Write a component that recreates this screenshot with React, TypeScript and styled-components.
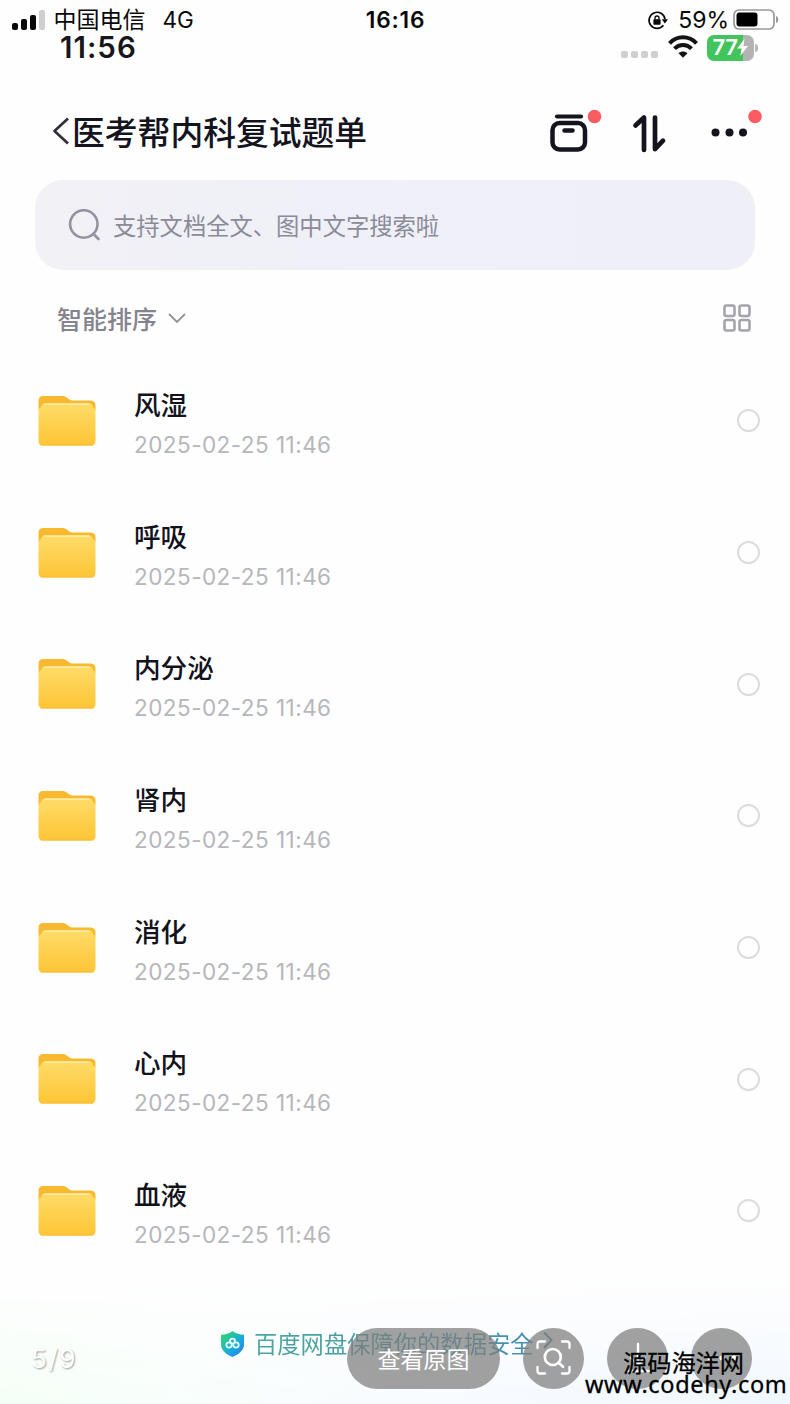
import React from "react";
import styled, { createGlobalStyle } from "styled-components";

const Global = createGlobalStyle`
  * { box-sizing: border-box; }
  html, body { margin: 0; padding: 0; background: #fefefe; }
  body { font-family: Inter, "Noto Sans CJK SC", sans-serif; color: #14141e; }
  svg { display: block; flex: none; overflow: visible; }
`;

const Screen = styled.main`
  position: relative;
  width: 790px;
  height: 1404px;
  overflow: hidden;
  display: flex;
  flex-direction: column;
  background: #fefefe;
`;

const StatusBar = styled.div`
  height: 34px;
  padding: 6px 11px 0 12px;
  display: grid;
  grid-template-columns: 1fr auto 1fr;
  align-items: center;
  color: #080808;
  line-height: 28px;
`;

const Group = styled.div<{ $end?: boolean }>`
  display: flex;
  align-items: center;
  justify-content: ${(p) => (p.$end ? "flex-end" : "flex-start")};
`;

const Label = styled.span<{ $size: number; $weight?: number; $track?: number; $left?: number }>`
  font-size: ${(p) => p.$size}px;
  font-weight: ${(p) => p.$weight ?? 400};
  letter-spacing: ${(p) => p.$track ?? 0}px;
  margin-left: ${(p) => p.$left ?? 0}px;
  white-space: nowrap;
`;

const InnerStatus = styled.div`
  height: 27px;
  padding: 0 32px 0 60px;
  display: flex;
  align-items: center;
  justify-content: space-between;
  line-height: 27px;
  color: #17171b;
`;

const SignalDots = styled.div`
  display: flex;
  gap: 3px;
  margin: 13px 10px 0 0;
  i { width: 7px; height: 7px; border-radius: 2px; background: #cfcfcf; }
`;

const ChargeBattery = styled.div`
  display: flex;
  align-items: center;
  justify-content: center;
  width: 47px;
  height: 26px;
  margin-left: 9px;
  border-radius: 7px;
  background: linear-gradient(90deg, #41c45c 76%, #b3b3b3 76%);
  color: #fff;
`;

const BatteryTip = styled.i`
  width: 3px;
  height: 8px;
  margin-left: 1px;
  border-radius: 0 3px 3px 0;
  background: #b8b8b8;
`;

const Header = styled.header`
  height: 119px;
  padding: 24px 28px 0 52px;
  display: flex;
  align-items: center;
`;

const Title = styled.h1`
  flex: 1;
  margin: 0 0 0 2px;
  font-size: 32.8px;
  line-height: 40px;
  font-weight: 500;
  color: #14141f;
`;

const Search = styled.div`
  height: 90px;
  margin: 0 35px;
  padding-left: 33px;
  display: flex;
  align-items: center;
  gap: 13px;
  border-radius: 28px;
  background: linear-gradient(90deg, #f1f1f6, #eff0f8 50%, #eff0f7);
  color: #8b8b98;
`;

const SortRow = styled.div`
  height: 84px;
  padding: 12px 39px 0 57px;
  display: flex;
  align-items: center;
  color: #84848f;
`;

const Spacer = styled.div`
  flex: 1;
`;

const List = styled.ul`
  margin: 0;
  padding: 0;
  list-style: none;
`;

const Row = styled.li`
  height: 131.7px;
  padding: 2px 30px 0 38px;
  display: flex;
  align-items: center;
`;

const RowText = styled.div`
  flex: 1;
  padding: 8px 0 0 38px;
  display: flex;
  flex-direction: column;
`;

const FileName = styled.span`
  font-size: 26.6px;
  line-height: 39px;
  font-weight: 500;
  color: #12121c;
`;

const FileDate = styled.span`
  font-size: 22.5px;
  line-height: 39px;
  letter-spacing: 0.46px;
  color: #b6b6bb;
`;

const Radio = styled.span`
  width: 23px;
  height: 23px;
  border: 2.5px solid #dcdce0;
  border-radius: 50%;
`;

const Footer = styled.footer`
  flex: 1;
  padding: 49px 0 0 221px;
  display: flex;
  align-items: flex-start;
  background:
    linear-gradient(180deg, #fefefe 0%, rgba(254, 254, 254, 0.6) 55%, rgba(254, 254, 254, 0.1) 100%),
    linear-gradient(90deg, #f3fff5 0%, #f7fffb 22%, #f8fbff 50%, #eef7ff 100%);
  color: #4997a3;
  line-height: 40px;
  svg { margin-top: 6px; }
`;

const SafetyText = styled.span`
  margin-left: 10px;
  font-size: 23.3px;
  background: linear-gradient(90deg, #4ba59e, #438fae);
  background-clip: text;
  color: transparent;
`;

const ViewerBar = styled.div`
  position: absolute;
  left: 0;
  right: 0;
  bottom: 15px;
  height: 61px;
  padding: 0 38px 0 31px;
  display: flex;
  align-items: center;
`;

const Counter = styled.span`
  flex: 1;
  font-size: 26px;
  letter-spacing: 1.6px;
  color: #fff;
  text-shadow: 1px 1px 2px rgba(0, 0, 0, 0.38);
`;

const Pill = styled.button<{ $width?: number; $gap?: number }>`
  width: ${(p) => p.$width ?? 61}px;
  height: 61px;
  margin: 0 0 0 ${(p) => p.$gap ?? 23}px;
  padding: 0 0 2px;
  border: 0;
  border-radius: 31px;
  display: flex;
  align-items: center;
  justify-content: center;
  background: rgba(125, 125, 125, 0.72);
  color: #fff;
  font: 400 23px/30px "Noto Sans CJK SC", sans-serif;
`;

const Watermark = styled.div`
  position: absolute;
  right: 4px;
  bottom: 10px;
  width: 201px;
  display: flex;
  flex-direction: column;
  color: #000;
  font-family: "Noto Sans", "Noto Sans CJK SC", sans-serif;
`;

const SiteName = styled.span`
  margin-left: 38px;
  font: 400 24.2px/24px "Noto Sans CJK SC", sans-serif;
  -webkit-text-stroke: 0.3px #000;
`;

const SiteUrl = styled.span`
  font-size: 23.5px;
  line-height: 20px;
  letter-spacing: 0.65px;
  -webkit-text-stroke: 0.3px #000;
  white-space: nowrap;
`;

const Signal = () => (
  <svg width="33" height="21" viewBox="0 0 33 21" fill="#080808">
    <rect x="0" y="13" width="6" height="7" rx="2" />
    <rect x="9" y="9" width="6" height="11" rx="2" />
    <rect x="18" y="5" width="6" height="15" rx="2" />
    <rect x="27" y="0" width="6" height="20" rx="2" fill="#cfcfcf" />
  </svg>
);

const RotationLock = () => (
  <svg width="20" height="19" viewBox="0 0 20 19" fill="none" stroke="#080808" strokeWidth="1.7">
    <path d="M15.400 14.200A8 8 0 1 1 17 8.200" />
    <path d="M13.800 8.200h6.200l-3.100 4.200z" fill="#080808" stroke="none" />
    <rect x="5.400" y="8.300" width="7.200" height="5.500" rx="1" fill="#080808" stroke="none" />
    <path d="M7 9V7a2 2 0 0 1 4 0v2" strokeWidth="1.300" />
  </svg>
);

const Battery = () => (
  <svg width="46" height="21" viewBox="0 0 46 21">
    <rect x="1" y="0" width="40" height="19" rx="5" fill="none" stroke="#999" strokeWidth="1.700" />
    <rect x="3.500" y="2.500" width="21" height="14" rx="3" fill="#000" />
    <path d="M43 6c3 .5 3 6.500 0 7z" fill="#999" />
  </svg>
);

const Wifi = () => (
  <svg width="30" height="23" viewBox="0 0 30 23" fill="none" stroke="#131316" strokeWidth="4">
    <path d="M1.500 7.300C9-.7 21-.7 28.500 7.300" />
    <path d="M6.500 12.700c4.800-4.900 12.200-4.900 17 0" />
    <path d="M15 21.800l-4.500-4.600c2.600-2.300 6.400-2.300 9 0z" fill="#131316" stroke="none" />
  </svg>
);

const Bolt = () => (
  <svg width="11" height="17" viewBox="0 0 11 17" fill="#fff">
    <path d="M7.500 0L0 9.500h4.500L3.300 17 11 7H6.400z" />
  </svg>
);

const BackIcon = () => (
  <svg width="18" height="30" viewBox="0 0 18 30" fill="none" stroke="#30303a" strokeWidth="2.700">
    <path d="M16 .5L2.500 13 16 25.500" strokeLinejoin="round" />
  </svg>
);

const ToolIcons = () => (
  <svg width="213" height="44" viewBox="0 0 213 44" fill="none" stroke="#14141f" strokeLinecap="round" strokeLinejoin="round">
    <path d="M8 5.500h24" strokeWidth="4.200" />
    <rect x="3.500" y="12" width="32.500" height="26.500" rx="7" strokeWidth="4.500" />
    <path d="M15.500 19.500h8" strokeWidth="4.500" />
    <path d="M86.500 14.500l8.500-8v32.500M106 6.500v31.700l8-8.500" strokeWidth="4.700" />
    <g fill="#14141f" stroke="none">
      <circle cx="166.500" cy="21.500" r="4" />
      <circle cx="180.500" cy="21.500" r="4" />
      <circle cx="194" cy="21.500" r="4" />
    </g>
    <g fill="#fa5c62" stroke="none">
      <circle cx="45.500" cy="5.500" r="6.800" />
      <circle cx="206" cy="5.500" r="6.800" />
    </g>
  </svg>
);

const SearchIcon = () => (
  <svg width="32" height="32" viewBox="0 0 32 32" fill="none" stroke="#9292a0" strokeWidth="2.600" strokeLinecap="round">
    <circle cx="15.800" cy="15" r="13.700" />
    <path d="M25.500 25l5 5" />
  </svg>
);

const Chevron = () => (
  <svg width="18" height="12" viewBox="0 0 18 12" fill="none" stroke="#92929d" strokeWidth="1.800">
    <path d="M1 2l8 8 8-8" />
  </svg>
);

const GridIcon = () => (
  <svg width="28" height="28" viewBox="0 0 28 28" fill="none" stroke="#a4a4ac" strokeWidth="2.600">
    <rect x="1.500" y="1.500" width="10" height="10.500" rx="2" />
    <rect x="16.500" y="1.500" width="10" height="10.500" rx="2" />
    <rect x="1.500" y="16" width="10" height="10.500" rx="2" />
    <rect x="16.500" y="16" width="10" height="10.500" rx="2" />
  </svg>
);

const FolderIcon = () => (
  <svg width="58" height="52" viewBox="0 0 58 52">
    <defs>
      <linearGradient id="folder-front" x1="0" y1="0" x2="0" y2="1">
        <stop offset="0" stopColor="#ffdc68" />
        <stop offset="1" stopColor="#fdc535" />
      </linearGradient>
    </defs>
    <path d="M.5 13V5.500C.5 2.500 2.500 1 5 1h20c4 0 5.500 4.500 9.500 4.500h17c4 0 6 1.700 6 5V15H.5z" fill="#f8b92e" />
    <path d="M.5 13.500C4.500 13 2.500 8.500 6.500 8.500h45c4 0 2 4.500 6 5V46c0 3-2 4.500-4.500 4.500H5C2.500 50.500.5 49 .5 46z" fill="url(#folder-front)" />
    <path d="M7 9.200h44" stroke="#ffeaa0" strokeWidth="1.800" strokeLinecap="round" />
    <path d="M3 50h52" stroke="#f7bd35" strokeWidth="1" strokeLinecap="round" />
  </svg>
);

const ShieldIcon = () => (
  <svg width="23" height="26" viewBox="0 0 23 27" preserveAspectRatio="none">
    <defs>
      <linearGradient id="shield-fill" x1="0" y1="0" x2="1" y2="1">
        <stop offset=".15" stopColor="#2bd17c" />
        <stop offset=".6" stopColor="#17a9e0" />
        <stop offset="1" stopColor="#3473ed" />
      </linearGradient>
    </defs>
    <path d="M11.500 0C15 2.800 18.500 3.500 23 4v10c0 6.500-6 10.500-11.500 13C6 24.500 0 20.500 0 14V4c4.500-.5 8-1.200 11.500-4z" fill="url(#shield-fill)" />
    <g fill="none" stroke="#e4fbff" strokeWidth="1.800">
      <circle cx="11.500" cy="10.500" r="2.500" />
      <circle cx="8" cy="14.500" r="2.700" />
      <circle cx="15" cy="14.500" r="2.700" />
    </g>
  </svg>
);

const Arrow = () => (
  <svg width="10" height="18" viewBox="0 0 10 18" fill="none" stroke="#438ba5" strokeWidth="1.900">
    <path d="M1 1.500l7.500 7.500L1 17" />
  </svg>
);

const ScanIcon = () => (
  <svg width="35" height="35" viewBox="0 0 35 35" fill="none" stroke="#fff" strokeWidth="2.300" strokeLinecap="round" strokeLinejoin="round">
    <path d="M1.500 8V4q0-2.500 2.500-2.500h5M26 1.500h5q2.500 0 2.500 2.500v4M33.500 27v4q0 2.500-2.500 2.500h-5M9 33.500H4q-2.500 0-2.500-2.500v-4" />
    <circle cx="16.800" cy="17" r="8" strokeWidth="2.700" />
    <path d="M22.700 22.800l4.300 4" strokeWidth="2.700" />
  </svg>
);

const DownloadIcon = () => (
  <svg width="28" height="30" viewBox="0 0 28 30" fill="none" stroke="#fff" strokeWidth="2.400" strokeLinecap="round" strokeLinejoin="round">
    <path d="M14 1v20M7 15l7 7 7-7M3 28h22" />
  </svg>
);

const MoreIcon = () => (
  <svg width="30" height="6" viewBox="0 0 30 6" fill="#fff">
    <circle cx="3" cy="3" r="2.500" />
    <circle cx="15" cy="3" r="2.500" />
    <circle cx="27" cy="3" r="2.500" />
  </svg>
);

const folders = ["风湿", "呼吸", "内分泌", "肾内", "消化", "心内", "血液"];

export default function App() {
  return (
    <>
      <Global />
      <Screen>
        <StatusBar>
          <Group>
            <Signal />
            <Label $size={23} $left={8.500}>中国电信</Label>
            <Label $size={22.500} $left={17}>4G</Label>
          </Group>
          <Label $size={22.700} $weight={600} $track={0.8}>16:16</Label>
          <Group $end>
            <RotationLock />
            <Label $size={23} $left={10}>59%</Label>
            <Label $size={1} $left={4} />
            <Battery />
          </Group>
        </StatusBar>
        <InnerStatus>
          <Label $size={29.500} $weight={600} $track={1}>11:56</Label>
          <Group $end>
            <SignalDots><i /><i /><i /><i /></SignalDots>
            <Wifi />
            <ChargeBattery>
              <Label $size={22} $weight={600} $track={-0.5}>77</Label>
              <Bolt />
            </ChargeBattery>
            <BatteryTip />
          </Group>
        </InnerStatus>
        <Header>
          <BackIcon />
          <Title>医考帮内科复试题单</Title>
          <ToolIcons />
        </Header>
        <Search>
          <SearchIcon />
          <Label $size={23.300}>支持文档全文、图中文字搜索啦</Label>
        </Search>
        <SortRow>
          <Label $size={25} $weight={500}>智能排序</Label>
          <Label $size={1} $left={11} />
          <Chevron />
          <Spacer />
          <GridIcon />
        </SortRow>
        <List>
          {folders.map((name) => (
            <Row key={name}>
              <FolderIcon />
              <RowText>
                <FileName>{name}</FileName>
                <FileDate>2025-02-25 11:46</FileDate>
              </RowText>
              <Radio />
            </Row>
          ))}
        </List>
        <Footer>
          <ShieldIcon />
          <SafetyText>百度网盘保障你的数据安全</SafetyText>
          <Label $size={1} $left={9} />
          <Arrow />
        </Footer>
        <ViewerBar>
          <Counter>5/9</Counter>
          <Pill $width={153} $gap={0}>查看原图</Pill>
          <Pill><ScanIcon /></Pill>
          <Pill><DownloadIcon /></Pill>
          <Pill><MoreIcon /></Pill>
        </ViewerBar>
        <Watermark>
          <SiteName>源码海洋网</SiteName>
          <SiteUrl>www.codehy.com</SiteUrl>
        </Watermark>
      </Screen>
    </>
  );
}
